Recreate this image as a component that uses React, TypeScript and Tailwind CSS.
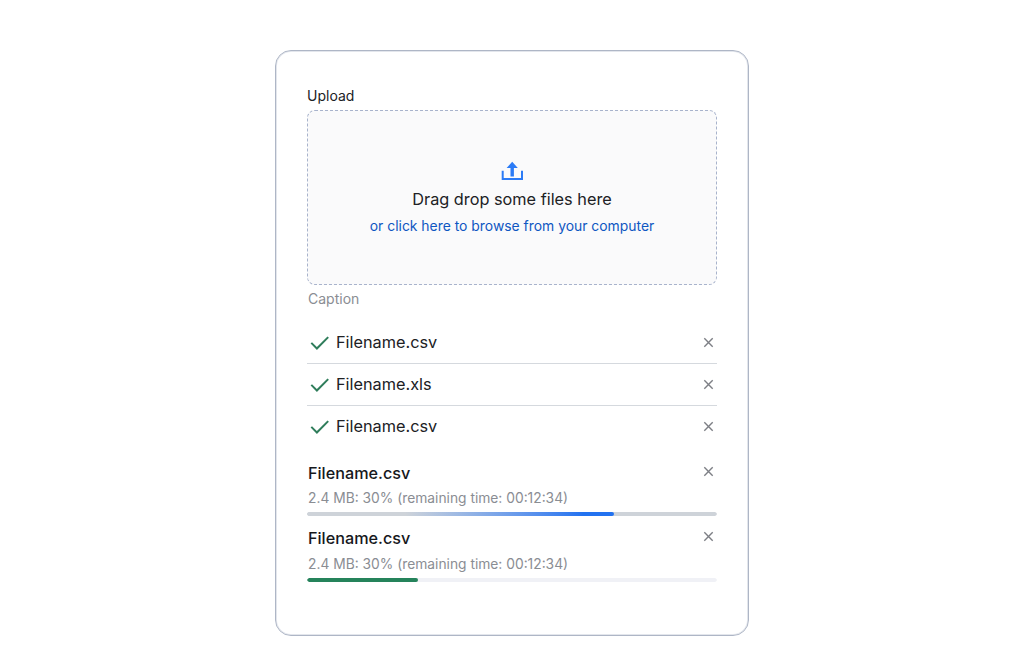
import React from 'react';

const CloseIcon: React.FC<{ className?: string }> = ({ className }) => (
  <svg className={className} width="16" height="16" viewBox="0 0 16 16" fill="none" stroke="#7d7f85" strokeWidth="1.4">
    <path d="M4.3 3.3l8.4 8.4M12.7 3.3l-8.4 8.4" />
  </svg>
);

const CheckIcon: React.FC = () => (
  <svg width="24" height="24" viewBox="0 0 24 24" fill="none" stroke="#2f7d5b" strokeWidth="2">
    <path d="M3.3 11.9l5.6 5.6L20.2 6.1" />
  </svg>
);

const UploadIcon: React.FC = () => (
  <svg width="24" height="24" viewBox="0 0 24 24" fill="none">
    <path d="M12.2 1.7l5.6 6.3h-3.9v8.5h-3.4V8H6.6z" fill="#2b7bf6" />
    <path d="M2.7 10.7V19h19.3v-8.3" stroke="#2b7bf6" strokeWidth="2" />
  </svg>
);

const DoneRow: React.FC<{ name: string; last?: boolean }> = ({ name, last }) => (
  <div className={`flex items-center justify-between h-[42px] pr-[1px] border-b ${last ? 'border-transparent' : 'border-[#d5d9de]'}`}>
    <div className="flex items-center gap-[4px] pl-[1px]">
      <CheckIcon />
      <span className="text-[16.3px] text-[#202124]">{name}</span>
    </div>
    <CloseIcon />
  </div>
);

const ProgressRow: React.FC<{ track: string; subGap: string; children: React.ReactNode }> = ({ track, subGap, children }) => (
  <div className="flex flex-col">
    <div className="flex items-start justify-between h-[24px] pr-[1px]">
      <span className="text-[16.2px] leading-[24px] font-medium text-[#16181c] pl-[1px]">Filename.csv</span>
      <CloseIcon className="mt-[3px]" />
    </div>
    <div className={`${subGap} text-[13.8px] leading-[20px] pl-[1px] text-[#8a8d93]`}>2.4 MB: 30% (remaining time: 00:12:34)</div>
    <div className="mt-[4px] h-[4px] rounded-full overflow-hidden">
      <div className={`h-full rounded-full overflow-hidden ${track}`}>{children}</div>
    </div>
  </div>
);

export default function App() {
  return (
    <div className="min-h-[666px] bg-white pt-[50px] font-['Inter',sans-serif]">
      <div className="mx-auto w-[474px] h-[586px] rounded-[16px] border border-[#aeb6c6] shadow-[inset_0_0_0_1px_#e3e6ec] bg-white px-[31px] pt-[35px]">
        <div className="text-sm leading-[20px] text-[#202124]">Upload</div>
        <div className="mt-[4px] h-[175px] flex flex-col items-center rounded-[8px] border border-dashed border-[#a8b3cc] bg-[#fafafb] pt-[49px]">
          <UploadIcon />
          <div className="mt-[3px] text-[16.3px] leading-[24px] text-[#202124]">Drag drop some files here</div>
          <div className="mt-[5px] text-[13.9px] leading-[20px] text-[#0f57c2]">or click here to browse from your computer</div>
        </div>
        <div className="mt-[4px] pl-[1px] text-[14px] leading-[20px] text-[#8a8d93]">Caption</div>
        <div className="mt-[13px] flex flex-col">
          <DoneRow name="Filename.csv" />
          <DoneRow name="Filename.xls" />
          <DoneRow name="Filename.csv" last />
        </div>
        <div className="mt-[13px] flex flex-col gap-[10px]">
          <ProgressRow track="bg-[#ced3d9]" subGap="mt-[3px]">
            <div className="h-full w-[307px] rounded-r-full bg-gradient-to-r from-[#ced3d9] from-[32%] to-[#2272f0] to-[90%]" />
          </ProgressRow>
          <ProgressRow track="bg-[#f0f1f6]" subGap="mt-[4px]">
            <div className="h-full w-[111px] rounded-full bg-[#25835b]" />
          </ProgressRow>
        </div>
      </div>
    </div>
  );
}
